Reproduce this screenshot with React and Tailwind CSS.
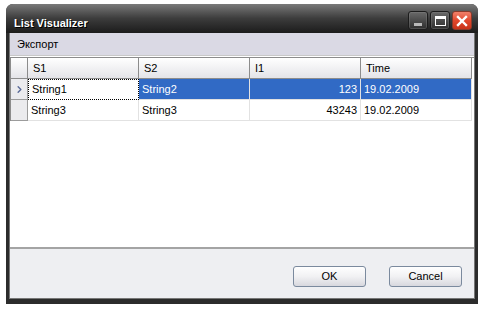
import { ChevronRight } from 'lucide-react';

const COLS = [
  { key: 's1', title: 'S1', w: 'w-[111px]' },
  { key: 's2', title: 'S2', w: 'w-[111px]' },
  { key: 'i1', title: 'I1', w: 'w-[111px]' },
  { key: 'time', title: 'Time', w: 'w-[111px]' },
];

const ROWS = [
  { s1: 'String1', s2: 'String2', i1: '123', time: '19.02.2009', selected: true },
  { s1: 'String3', s2: 'String3', i1: '43243', time: '19.02.2009' },
];

function CaptionButton({ kind }) {
  if (kind === 'close') {
    return (
      <div className="w-[20px] h-[19px] rounded-[3px] border border-[#8a3a2a] bg-gradient-to-b from-[#f0806a] via-[#e2472c] to-[#c83218] flex items-center justify-center">
        <svg width="12" height="12" viewBox="0 0 12 12">
          <path d="M2 2 L10 10 M10 2 L2 10" stroke="#fff" strokeWidth="2.4" strokeLinecap="square" />
        </svg>
      </div>
    );
  }
  return (
    <div className="w-[20px] h-[19px] rounded-[3px] border border-[#1c1c1c] bg-gradient-to-b from-[#6a6a6a] to-[#2e2e2e] shadow-[inset_0_0_0_1px_#8a8a8a55] flex items-center justify-center">
      {kind === 'min' ? (
        <div className="w-[8px] h-[3px] bg-[#b8b8b8] mt-[7px]" />
      ) : (
        <div className="w-[11px] h-[10px] border border-white border-t-[3px]" />
      )}
    </div>
  );
}

function WinButton({ children }) {
  return (
    <button className="w-[73px] h-[21px] rounded-[3px] border border-[#7b8a9e] bg-gradient-to-b from-white via-[#f1f1f3] to-[#d8d8de] text-[11px] text-black">
      {children}
    </button>
  );
}

export default function App() {
  return (
    <div className="w-[486px] h-[309px] bg-white pt-[4px] pl-[6px]" style={{ fontFamily: '"Liberation Sans", Arial, sans-serif' }}>
      <div className="w-[472px] h-[300px] rounded-t-[7px] bg-[#2c2c2c] flex flex-col">
        <div className="h-[29px] rounded-t-[7px] bg-gradient-to-b from-[#7a7a7a] via-[#3c3c3c] to-[#1c1c1c] flex items-start pl-[8px] pr-[6px] pt-[6px]">
          <div className="text-white font-bold text-[11px] leading-[14px] mt-[6px] [text-shadow:1px_1px_0_#000]">List Visualizer</div>
          <div className="ml-auto flex gap-[2px] mt-[1px]">
            <CaptionButton kind="min" />
            <CaptionButton kind="max" />
            <CaptionButton kind="close" />
          </div>
        </div>

        <div className="flex-1 flex flex-col px-[3px] pb-[5px]">
          <div className="flex-1 flex flex-col border-x border-b border-[#777]">
            <div className="h-[22px] bg-[#dad9e4] flex items-center pl-[7px] text-[11px] text-black">Экспорт</div>

            <div className="h-[192px] bg-white border-t border-[#c8c8c8] pt-[1px]">
              <div className="border-l border-t border-[#8c8c8c]">
                <div className="flex h-[21px]">
                  <div className="w-[17px] bg-gradient-to-b from-white to-[#e4e4e8] border-r border-b border-[#8c8c8c]" />
                  {COLS.map(c => (
                    <div key={c.key} className={`${c.w} bg-gradient-to-b from-white to-[#e4e4e8] border-r border-b border-[#8c8c8c] pl-[5px] flex items-center text-[11px] text-black`}>
                      {c.title}
                    </div>
                  ))}
                </div>
                {ROWS.map((r, i) => (
                  <div key={i} className="flex h-[21px]">
                    <div className="w-[17px] bg-[#ebebee] border-r border-b border-[#9c9c9c] flex items-center justify-center">
                      {r.selected && <ChevronRight size={11} strokeWidth={3} className="text-[#5a6a98]" />}
                    </div>
                    {COLS.map(c => {
                      const focused = r.selected && c.key === 's1';
                      const sel = r.selected && !focused;
                      return (
                        <div key={c.key} className={`${c.w} border-r border-b border-[#e2e2e2] text-[11px] flex items-center ${c.key === 'i1' ? 'justify-end pr-[3px]' : 'pl-[3px]'} ${sel ? 'bg-[#316ac5] text-white' : 'text-black'} ${focused ? 'border border-dotted border-black' : ''}`}>
                          {r[c.key]}
                        </div>
                      );
                    })}
                  </div>
                ))}
              </div>
            </div>

            <div className="flex-1 bg-[#eeeff2] border-t-2 border-[#a4a4a4] flex items-start justify-end pt-[17px] pr-[12px] gap-[23px]">
              <WinButton>OK</WinButton>
              <WinButton>Cancel</WinButton>
            </div>
          </div>
        </div>
      </div>
    </div>
  );
}
